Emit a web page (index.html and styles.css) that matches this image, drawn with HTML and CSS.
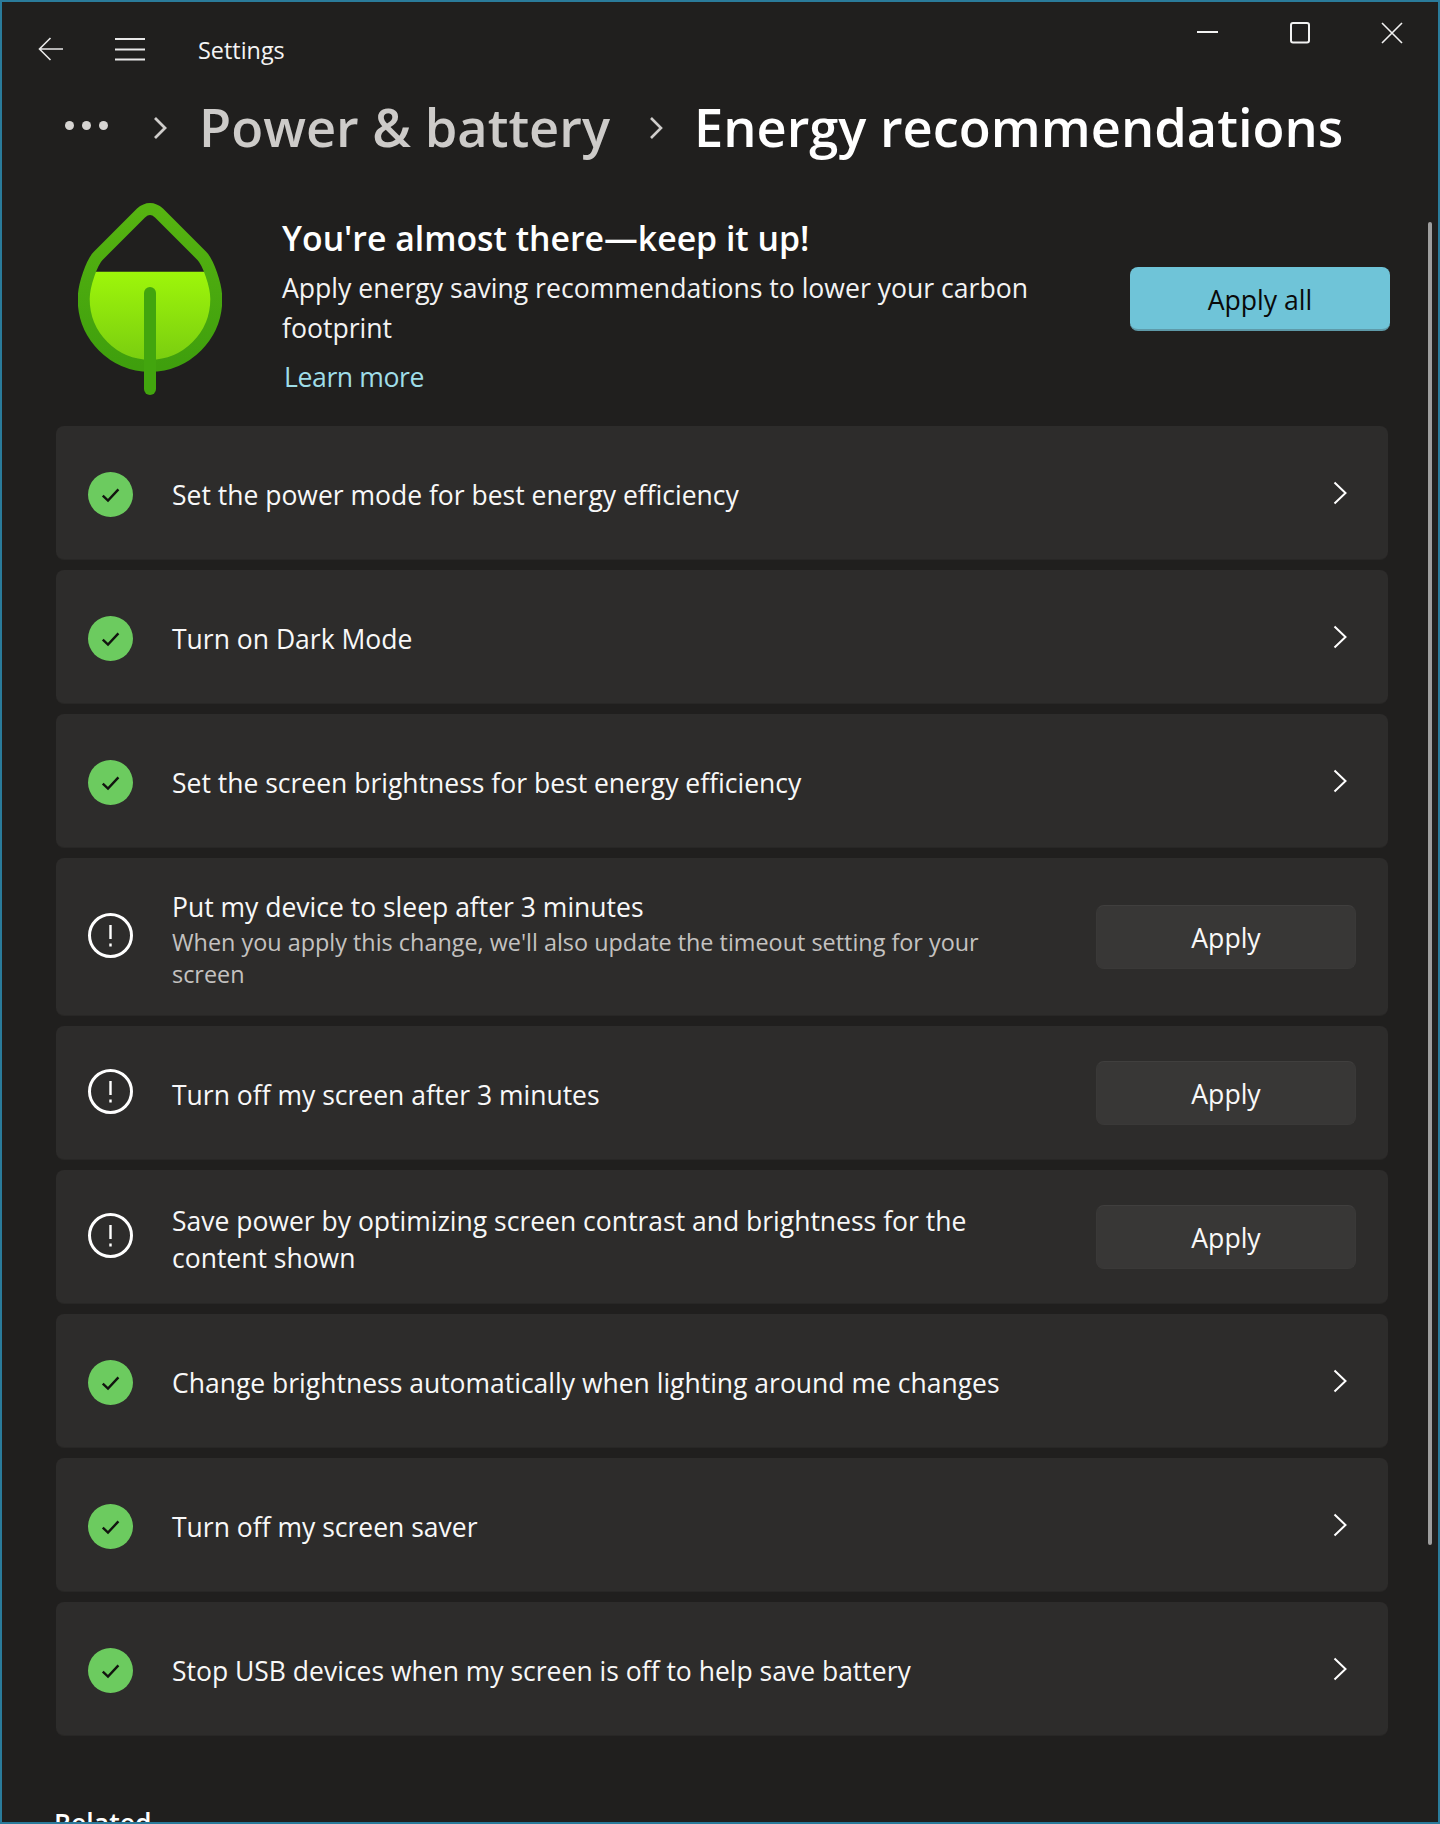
FILE: index.html
```html
<!DOCTYPE html>
<html lang="en">
<head>
<meta charset="utf-8">
<title>Settings</title>
<link rel="stylesheet" href="styles.css">
</head>
<body>
<svg class="defs" width="0" height="0" aria-hidden="true">
  <defs>
    <symbol id="i-check" viewBox="0 0 45 45">
      <circle cx="22.5" cy="22.5" r="22.5" fill="#6ccb5f"/>
      <path d="M14.8 23.6 20 28.6 30.4 17.4" fill="none" stroke="#12140f" stroke-width="2.4"/>
    </symbol>
    <symbol id="i-warn" viewBox="0 0 45 45">
      <circle cx="22.5" cy="22.5" r="21" fill="none" stroke="#fff" stroke-width="3"/>
      <path d="M22.5 12V26M22.5 30.6V33.4" fill="none" stroke="#fff" stroke-width="2.4"/>
    </symbol>
    <symbol id="i-chev" viewBox="0 0 14 24">
      <path d="M1.5 1.5 12.5 12 1.5 22.5" fill="none" stroke="#fff" stroke-width="2"/>
    </symbol>
    <linearGradient id="leafFill" x1="0" y1="0" x2="0" y2="1">
      <stop offset="0.400" stop-color="#9ef60a"/>
      <stop offset="1" stop-color="#78cb10"/>
    </linearGradient>
    <linearGradient id="leafLine" x1="0" y1="0" x2="0" y2="1">
      <stop offset="0" stop-color="#56b411"/>
      <stop offset="1" stop-color="#3f9f0d"/>
    </linearGradient>
    <clipPath id="leafClip"><rect x="0" y="68.700" width="144" height="130"/></clipPath>
  </defs>
</svg>
<div class="window">
  <div class="scrollbar"></div>
  <header class="titlebar">
    <svg class="tb-back" width="26" height="24" viewBox="0 0 26 24"><path d="M25 12H2M12.5 1 1.5 12 12.5 23" fill="none" stroke="#e8e8e8" stroke-width="1.6"/></svg>
    <svg class="tb-menu" width="30" height="24" viewBox="0 0 30 24"><path d="M0 2H30M0 12.500H30M0 22.500H30" fill="none" stroke="#e8e8e8" stroke-width="1.8"/></svg>
    <span class="tb-title">Settings</span>
    <div class="tb-controls">
      <svg width="22" height="22" viewBox="0 0 22 22"><path d="M0 10H21" fill="none" stroke="#f2f2f2" stroke-width="2"/></svg>
      <svg width="22" height="22" viewBox="0 0 22 22"><rect x="2" y="1" width="18" height="19.500" rx="2" fill="none" stroke="#f2f2f2" stroke-width="2"/></svg>
      <svg width="22" height="22" viewBox="0 0 22 22"><path d="M1 1 21 21M21 1 1 21" fill="none" stroke="#f2f2f2" stroke-width="1.6"/></svg>
    </div>
  </header>
  <nav class="crumbs">
    <span class="dots"><i></i><i></i><i></i></span>
    <svg class="crumb-chev c1" width="14" height="24" viewBox="0 0 14 24"><path d="M2 2 12 12 2 22" fill="none" stroke="#cfcdcb" stroke-width="2.8"/></svg>
    <span class="crumb">Power &amp; battery</span>
    <svg class="crumb-chev c2" width="14" height="24" viewBox="0 0 14 24"><path d="M2 2 12 12 2 22" fill="none" stroke="#cfcdcb" stroke-width="2.6"/></svg>
    <span class="crumb current">Energy recommendations</span>
  </nav>
  <section class="hero">
    <svg class="leaf" width="144" height="192" viewBox="0 0 144 192">
      <path clip-path="url(#leafClip)" fill="url(#leafFill)" d="M63 10Q72 2 81 10L123.700 52.700C130 59 138.300 82 138.300 96C138.300 133 108.500 162.700 72 162.700C35.500 162.700 5.700 133 5.700 96C5.700 82 14 59 20.300 52.700Z"/>
      <path fill="none" stroke="url(#leafLine)" stroke-width="12" stroke-linejoin="round" d="M63 10Q72 2 81 10L123.700 52.700C130 59 138.300 82 138.300 96C138.300 133 108.500 162.700 72 162.700C35.500 162.700 5.700 133 5.700 96C5.700 82 14 59 20.300 52.700Z"/>
      <path d="M72 90V186" fill="none" stroke="#42a50e" stroke-width="12" stroke-linecap="round"/>
    </svg>
    <div class="hero-text">
      <h1>You're almost there—keep it up!</h1>
      <p>Apply energy saving recommendations to lower your carbon footprint</p>
      <a class="learn">Learn more</a>
    </div>
    <button class="btn-primary">Apply all</button>
  </section>
  <div class="list">
    <div class="row"><svg class="ic ok"><use href="#i-check"/></svg><div class="txt"><div class="t">Set the power mode for best energy efficiency</div></div><svg class="chev"><use href="#i-chev"/></svg></div>
    <div class="row"><svg class="ic ok"><use href="#i-check"/></svg><div class="txt"><div class="t">Turn on Dark Mode</div></div><svg class="chev"><use href="#i-chev"/></svg></div>
    <div class="row"><svg class="ic ok"><use href="#i-check"/></svg><div class="txt"><div class="t">Set the screen brightness for best energy efficiency</div></div><svg class="chev"><use href="#i-chev"/></svg></div>
    <div class="row"><svg class="ic warn"><use href="#i-warn"/></svg><div class="txt"><div class="t">Put my device to sleep after 3 minutes</div><div class="s">When you apply this change, we'll also update the timeout setting for your screen</div></div><button class="btn">Apply</button></div>
    <div class="row"><svg class="ic warn"><use href="#i-warn"/></svg><div class="txt"><div class="t">Turn off my screen after 3 minutes</div></div><button class="btn">Apply</button></div>
    <div class="row"><svg class="ic warn"><use href="#i-warn"/></svg><div class="txt"><div class="t">Save power by optimizing screen contrast and brightness for the content shown</div></div><button class="btn">Apply</button></div>
    <div class="row"><svg class="ic ok"><use href="#i-check"/></svg><div class="txt"><div class="t">Change brightness automatically when lighting around me changes</div></div><svg class="chev"><use href="#i-chev"/></svg></div>
    <div class="row"><svg class="ic ok"><use href="#i-check"/></svg><div class="txt"><div class="t">Turn off my screen saver</div></div><svg class="chev"><use href="#i-chev"/></svg></div>
    <div class="row"><svg class="ic ok"><use href="#i-check"/></svg><div class="txt"><div class="t">Stop USB devices when my screen is off to help save battery</div></div><svg class="chev"><use href="#i-chev"/></svg></div>
  </div>
  <h2 class="related">Related</h2>
</div>
</body>
</html>
```
FILE: styles.css
```css
* { box-sizing: border-box; }
html, body { margin: 0; padding: 0; background: #201f1e; }
body { font-family: "Open Sans", "Noto Sans", sans-serif; color: #fff; }
.defs { position: absolute; }
.window {
  position: relative;
  width: 1440px;
  height: 1824px;
  border: 2px solid #2a7b9b;
  background: #201f1e;
  overflow: hidden;
}
.scrollbar {
  position: absolute;
  left: 1426px;
  top: 220px;
  width: 4px;
  height: 1323px;
  border-radius: 2px;
  background: #9e9e9e;
}
.titlebar {
  display: flex;
  align-items: center;
  height: 74px;
  padding: 20px 0 0 36px;
}
.tb-back { margin-right: 51px; }
.tb-menu { margin-right: 53px; }
.tb-title { font-size: 23.4px; color: #f4f4f4; margin-top: 2px; }
.tb-controls {
  display: flex;
  gap: 70px;
  margin-left: auto;
  margin-right: 35px;
  align-self: flex-start;
}
.crumbs {
  display: flex;
  align-items: center;
  height: 100px;
  padding: 2px 0 0 63px;
}
.dots { display: flex; gap: 8px; margin-right: 45px; margin-top: -4px; }
.dots i { display: block; width: 9px; height: 9px; border-radius: 50%; background: #d6d4d2; }
.crumb-chev { margin-top: 2px; }
.c1 { margin-right: 32px; }
.c2 { margin-left: 39px; margin-right: 31px; }
.crumb { font-size: 52.4px; font-weight: 600; color: #cdcbc9; line-height: 98px; white-space: nowrap; }
.crumb.current { color: #fff; }
.hero {
  display: flex;
  align-items: flex-start;
  height: 250px;
  padding: 27px 48px 0 76px;
}
.leaf { flex: none; margin-right: 60px; }
.hero-text { width: 780px; padding-top: 13px; }
.hero-text h1 { margin: 0; font-size: 33.8px; font-weight: 600; line-height: 44px; }
.hero-text p { margin: 8px 0 0; font-size: 26.6px; line-height: 40px; color: #f3f3f3; }
.learn { display: block; margin: 9px 0 0 2px; font-size: 26.6px; line-height: 40px; letter-spacing: -0.4px; color: #9fdde8; }
.btn-primary {
  margin-left: auto;
  margin-top: 64px;
  padding: 3px 0 0;
  flex: none;
  width: 260px;
  height: 64px;
  border: 0;
  border-bottom: 2px solid #5e9aa9;
  border-radius: 8px;
  background: #6fc4d8;
  color: #0a0a0a;
  font: 400 26.6px "Open Sans", sans-serif;
}
.list {
  display: flex;
  flex-direction: column;
  gap: 10px;
  margin: 0 50px 0 54px;
}
.row {
  display: flex;
  align-items: center;
  min-height: 134px;
  padding: 26px 32px 25px;
  background: #2d2c2b;
  border-radius: 8px;
  border-bottom: 1px solid #282726;
}
.ic { flex: none; width: 45px; height: 45px; margin-right: 39px; }
.ic.ok { margin-top: 3px; }
.ic.warn { margin-bottom: 3px; }
.txt { flex: none; width: 850px; padding-top: 5px; }
.t { font-size: 26.5px; line-height: 37px; color: #f8f8f8; }
.s { font-size: 23.4px; line-height: 32px; color: #c4c2c0; }
.chev { flex: none; width: 14px; height: 24px; margin-left: auto; margin-right: 9px; }
.btn {
  flex: none;
  margin-left: auto;
  width: 260px;
  height: 64px;
  padding: 2px 0 0;
  border: 1px solid #3a3938;
  border-top-color: #403f3e;
  border-radius: 8px;
  background: #383736;
  color: #f8f8f8;
  font: 400 26.6px "Open Sans", sans-serif;
}
.related { margin: 69px 0 0 52px; font-size: 26.6px; font-weight: 600; line-height: 37px; }
```
